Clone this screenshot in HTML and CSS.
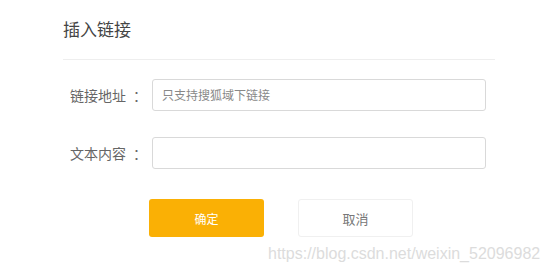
FILE: index.html
```html
<!DOCTYPE html>
<html lang="zh">
<head>
<meta charset="utf-8">
<link rel="stylesheet" href="styles.css">
</head>
<body>
<div class="dialog">
  <div class="title">插入链接</div>
  <div class="form">
    <div class="row">
      <label class="label">链接地址<span class="colon">：</span></label>
      <div class="input placeholder">只支持搜狐域下链接</div>
    </div>
    <div class="row">
      <label class="label">文本内容<span class="colon">：</span></label>
      <div class="input"></div>
    </div>
    <div class="actions">
      <div class="btn ok">确定</div>
      <div class="btn cancel">取消</div>
    </div>
  </div>
  <div class="watermark">https://blog.csdn.net/weixin_52096982</div>
</div>
</body>
</html>
```
FILE: styles.css
```css
html, body { margin: 0; padding: 0; background: #fff; }
body {
  width: 549px; height: 276px; overflow: hidden;
  font-family: "Noto Sans CJK SC", "Liberation Sans", sans-serif;
}
.dialog { position: relative; padding: 0 54px 0 63px; height: 276px; box-sizing: border-box; }
.title {
  font-size: 17px; color: #444; line-height: 20px;
  padding-top: 19px; padding-bottom: 20px;
  border-bottom: 1px solid #eeeeee;
  width: 432px;
}
.form { padding-top: 19px; }
.row { display: flex; align-items: center; margin-bottom: 26px; }
.label {
  width: 89px; box-sizing: border-box; padding-left: 7px;
  font-size: 14px; color: #666; white-space: nowrap;
}
.colon { display: inline-block; padding-left: 7px; }
.input {
  width: 334px; height: 32px; box-sizing: border-box;
  border: 1px solid #d9d9d9; border-radius: 3px;
  padding-left: 9px; font-size: 12px; line-height: 30px; color: #888;
}
.actions { display: flex; gap: 34px; padding-left: 86px; padding-top: 4px; }
.btn {
  width: 115px; height: 38px; box-sizing: border-box; border-radius: 3px;
  display: flex; align-items: center; justify-content: center; font-size: 12px;
}
.ok { background: #fab005; color: #fff; }
.cancel { border: 1px solid #f0f0f0; color: #777; font-size: 13px; }
.watermark {
  position: absolute; left: 268px; top: 245px;
  font-family: "Liberation Sans", Arial, sans-serif;
  font-size: 16px; color: #dcdcdc; white-space: nowrap;
}
```
